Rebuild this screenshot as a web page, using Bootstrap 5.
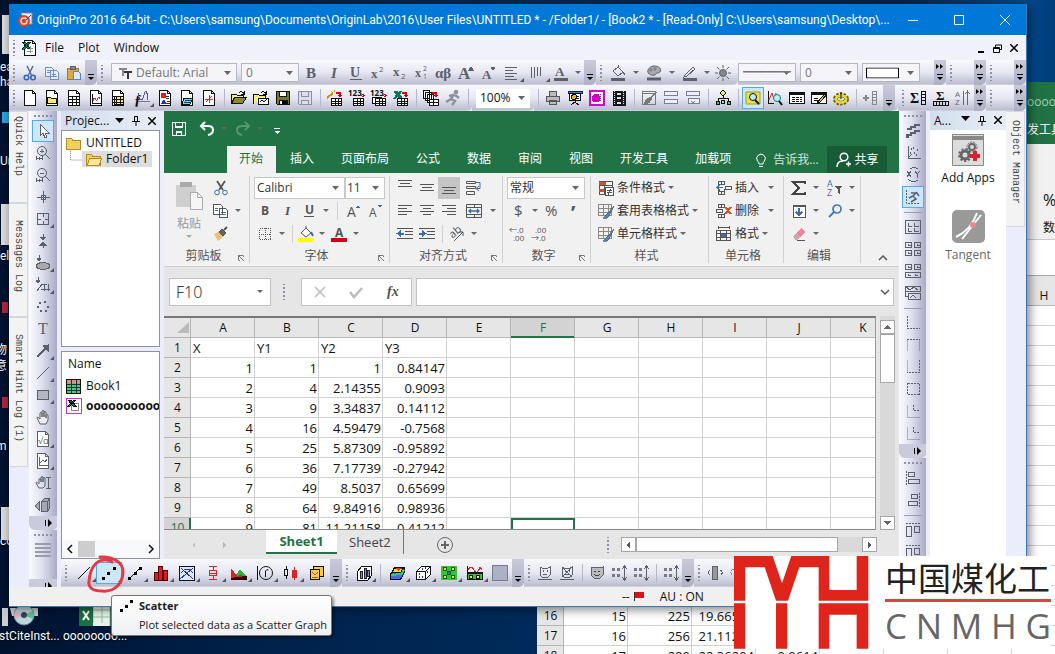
<!DOCTYPE html>
<html lang="zh-CN">
<head>
<meta charset="utf-8">
<meta name="viewport" content="width=device-width, initial-scale=1">
<title>OriginPro 2016 64-bit</title>
<link href="https://cdn.jsdelivr.net/npm/bootstrap@5.3.0/dist/css/bootstrap.min.css" rel="stylesheet">
<style>
:root{--ui:"Open Sans","Noto Sans CJK SC",sans-serif;--green:#217346;--lav:#ebedfc}
html,body{height:100%}
body{font:12px/16px var(--ui);color:#111;overflow:hidden;background:#002149}
button,select,input{font:inherit;color:inherit;border-radius:0}
button{background:none;border:0;padding:0}
.desk{position:relative;height:100vh;overflow:hidden;background:linear-gradient(90deg,#001230 0,#00224b 25%,#002a5a 50%,#00244e 85%,#004a8c 97%,#003c7a)}
.deskitem{position:absolute;color:#fff;white-space:nowrap;text-shadow:0 1px 2px #000;font-family:Roboto,"Noto Sans CJK SC",sans-serif}
.win{position:absolute;display:flex;flex-direction:column;overflow:hidden}
.win aside{flex:none}
.back{left:537px;top:82px;right:0;bottom:0;background:#f1f1f1}
.back>*{flex:none}
.back .edge{padding-left:490px;white-space:nowrap;overflow:hidden}
.back .green{background:var(--green);height:62px;color:#9fd3b5}
.back .rib{height:96px;border-bottom:1px solid #c8c8c8}
.back .fml{height:36px;background:#fff;border-bottom:1px solid #aaa}
.back .cells{width:539px;background:#fff}
.main{left:9px;top:4px;right:28px;bottom:47px;background:var(--lav);border-right:1px solid #3a7ab8;border-bottom:1px solid #3a7ab8;box-shadow:2px 2px 10px #0008}
.titlebar{height:31px;background:#0078d7;color:#fff;flex:none}
.titlebar>span{font-family:Roboto,sans-serif}
.titlebar button{width:46px;height:31px}
.menubar{height:25px;background:#f1f1fc;flex:none}
.menubar .mi{margin-left:14px}
.strip{height:25px;flex:none}
.strip+.strip{height:26px}
.tools{background:linear-gradient(#f8f8fd,#e6e7f2 50%,#bcbed0 96%,#dcdcea);display:flex;align-items:center;height:100%;border-radius:0 0 5px 0}
.tools.vert{flex-direction:column;background:linear-gradient(90deg,#fbfbff,#dfe1f0 45%,#a9abc6)}
.tb{width:22px;height:22px;flex:none;display:flex;align-items:center;justify-content:center;position:relative;color:#111}
.tb svg{display:block;overflow:visible}
.tb.on{background:#cce6fa;box-shadow:inset 0 0 0 1px #5aa9e6}
.tb.corner::after{content:"";position:absolute;right:0;bottom:2px;border:2px solid;border-color:transparent #555 #555 transparent}
.dim .tb,.vert .tb{color:#5c606b}
.sepv{width:8px;height:18px;flex:none;background:linear-gradient(#b5b7c8,#b5b7c8) center/1px 100% no-repeat}
.vert .sepv{width:18px;height:8px;background:linear-gradient(#9a9cb5,#9a9cb5) center/100% 1px no-repeat}
.dropv{width:12px;height:20px;flex:none;display:flex;align-items:center;justify-content:center}
.dropv::before{content:"";border:3px solid transparent;border-top-color:#666;border-bottom:0}
.grip{width:10px;height:16px;flex:none;background:radial-gradient(circle,#8f91a5 1px,transparent 1px) center/4px 4px repeat-y}
.vert .grip{width:18px;height:9px;background:radial-gradient(circle,#8f91a5 1px,transparent 1px) center/4px 4px repeat-x}
.cap{width:12px;height:100%;flex:none;background:linear-gradient(#c9cad9,#aeb0c6);border-radius:0 0 6px 0;color:#000;display:flex;align-items:end;justify-content:center}
.vert .cap{width:100%;height:14px;background:#c9cbdd;align-items:center;justify-content:end;border-radius:0 0 6px 6px}
.pick{appearance:none;border:1px solid #b5b7c4;height:19px;line-height:16px;padding:0 4px;flex:none;margin-right:4px;background:#fff url("data:image/svg+xml,%3Csvg xmlns='http://www.w3.org/2000/svg' viewBox='0 0 7 4'%3E%3Cpath d='M0 0h7L3.500 4z' fill='%23666'/%3E%3C/svg%3E") no-repeat right 5px center/7px 4px}
.dim .pick{color:#777;background-color:#f4f4f9}
.sidetab{writing-mode:vertical-rl;font:10px/18px "Liberation Mono",monospace;color:#444;background:#f3f3f3;border:1px solid #d5d6e4;border-left:0;height:114px;padding-top:16px;width:19px;white-space:nowrap}
.panelhead{height:19px;background:linear-gradient(90deg,#d3dfee,#e7edf6);flex:none;padding:0 4px}
.box{background:#fff;border:1px solid #8e919c;overflow:hidden}
.colname{padding:0 6px 6px}
.xl{background:#e6e6e6;min-width:0;overflow:hidden}
.qat{height:35px;background:var(--green);flex:none}
.qat .tb{color:#fff}
.xtabs{height:27px;background:var(--green);color:#fff;flex:none;white-space:nowrap}
.xtabs a{color:#fff;text-decoration:none;padding:0 13px;line-height:25px;margin-right:1px}
.xtabs a.on{background:#f1f1f1;color:var(--green);padding-left:12px;height:27px}
.ribbon{height:94px;background:#f1f1f1;border-bottom:1px solid #cfcfcf;flex:none;padding-top:3px}
.rg{border-right:1px solid #d0d0d0;height:87px;padding-left:4px;display:flex;flex-direction:column;flex:none;position:relative;color:#333}
.rg>.r{height:23px;display:flex;align-items:center;flex:none}
.rg .tb{color:#555}
.rg .sepv{background:linear-gradient(#d0d0d0,#d0d0d0) center/1px 100% no-repeat}
.rg .tb.on{background:#c5c5c5;box-shadow:none}
.rg footer{margin-top:auto;text-align:center;color:#555;line-height:14px;padding:0 10px 0 0}
.rg .launch::after{content:"";position:absolute;right:5px;bottom:2px;width:6px;height:6px;border:1px solid;border-color:#777 transparent transparent #777;background:linear-gradient(45deg,transparent 45%,#777 45% 60%,transparent 60%)}
.rg .pick{height:22px;border-color:#c8c8c8;margin:0}
.fbar{height:49px;flex:none;padding:0 5px}
.fbar .field{height:28px;background:#fff;border:1px solid #c3c3c3}
.fbar input{border:0;background:transparent;min-width:0;outline:0}
.fbar .tb{color:#555}
.sheet{border-top:2px solid #777;border-right:1px solid #999;border-bottom:1px solid #888;overflow:hidden;background:#fff;min-width:0}
.cells{table-layout:fixed;border-collapse:separate;border-spacing:0;font-size:13px;line-height:18px;color:#111;width:731px}
.cells th,.cells td{height:20px;padding:0 1px 0 2px;border-right:1px solid #d0d0d0;border-bottom:1px solid #d0d0d0;font-weight:400;white-space:nowrap;overflow:hidden;width:64px}
.cells td{text-align:right}
.cells td.tx{text-align:left}
.cells th{background:#e6e6e6;text-align:center;border-color:#b5b5b5;font-size:12px}
.cells th:first-child{width:27px}
.cells th.sel{background:#d3d3d3;color:var(--green);box-shadow:inset 0 -1px var(--green);border-bottom-color:var(--green)}
.cells tbody th.sel{box-shadow:inset -1px 0 var(--green);border-right-color:var(--green)}
.cells td.cur{border:2px solid var(--green)}
.sb{background:#fff;border:1px solid #a6a6a6;flex:none;display:flex;align-items:center;justify-content:center}
.sheettab{height:24px;font-size:13px;color:#444;text-align:left}
.sheettab.on{width:71px;background:#fff;color:var(--green);border-bottom:2px solid var(--green);text-align:center;font-weight:700}
.tip{position:absolute;left:111px;top:595px;width:221px;height:41px;background:linear-gradient(#fff,#eff0f4);border:1px solid #767676;border-radius:3px;box-shadow:2px 2px 3px #0006;color:#222;padding:0 0 0 27px;font-size:11px;line-height:19px;white-space:nowrap}
.ring{position:absolute;left:85px;top:553px}
.brand{position:absolute;left:734px;top:556px;width:317px;height:93px;background:#fff}
.brand h2{font:33px/43px "Noto Sans CJK SC",sans-serif;margin:0;color:#222}
.brand p{font-size:35px;line-height:40px;color:#666;margin:0}
</style>
</head>
<body>
<div class="desk">
  <div class="deskitem" style="left:0;top:59px">ea</div>
  <div class="deskitem" style="left:0;top:74px">ha</div>
  <div class="deskitem" style="left:0;top:153px">Ur</div>
  <div class="deskitem" style="left:0;top:248px">ela</div>
  <div class="deskitem" style="left:-5px;top:342px">物</div>
  <div class="deskitem" style="left:-5px;top:358px">意</div>
  <div class="deskitem" style="left:-4px;top:438px">m</div>
  <div class="deskitem" style="left:0;top:533px">co</div>
  <svg class="deskitem" style="left:0;top:0" width="10" height="540" aria-hidden="true"><path fill="#ddd" d="M2 15h8v39H2zM1 204h9v41H1zM1 507h9v33H1z"/><path fill="#2ba4e0" d="M2 112h8v11H2z"/><path fill="#b3233c" d="M2 302h6v11H2zM2 397h6v11H2z"/></svg>
  <svg class="deskitem" style="left:0;top:600px" width="120" height="26" aria-hidden="true"><path fill="#ccc" d="M2 8h6v24H2zM10 8h28v8H12z"/><circle cx="24" cy="15" r="10" fill="#bcd8dc" stroke="#789"/><path d="M24 15l9-4a10 10 0 010 8z" fill="#5bc0a0"/><path d="M24 15l-9 4a10 10 0 010-8z" fill="#e0b0d0"/><circle cx="24" cy="15" r="3" fill="#345"/><path fill="#e8f3e9" stroke="#8fbf99" d="M84 3h26v28H84zM93 3v20M102 3v20M84 10h26M84 17h26"/><path fill="#1d7044" d="M79 5l14-2v26l-14-2z"/><path stroke="#fff" stroke-width="2" d="M83 11l6 9M89 11l-6 9"/></svg>
  <div class="deskitem" style="left:-1px;top:628px">stCiteInst...</div>
  <div class="deskitem" style="left:63px;top:628px">oooooooo...</div>

  <section class="win back" aria-label="Workbook">
    <div class="green edge"><div class="pt-2 mt-1">ooooo</div><div class="pt-2 mt-1 text-white">发工具</div></div>
    <div class="rib edge"><div class="mt-5 ps-3 fs-6">%</div><div class="mt-2 ps-3 pt-1">数</div></div>
    <div class="fml"></div>
    <table class="cells" id="backcells"></table>
  </section>

  <main class="win main">
    <header class="titlebar d-flex align-items-center">
      <svg class="ms-2 me-1 flex-shrink-0" width="16" height="16" viewBox="0 0 16 16"><path d="M4 1h11v11H8z" fill="#eef" stroke="#889"/><circle cx="7" cy="9" r="6" fill="#d9432f"/><circle cx="7" cy="9" r="3" fill="none" stroke="#ffd9cf" stroke-width="1.500"/><path d="M9 8l5-5" stroke="#444"/></svg>
      <span class="text-nowrap">OriginPro 2016 64-bit - C:\Users\samsung\Documents\OriginLab\2016\User Files\UNTITLED * - /Folder1/ - [Book2 * - [Read-Only] C:\Users\samsung\Desktop\...</span>
      <div class="ms-auto d-flex">
        <button aria-label="Minimize"><svg width="10" height="10" stroke="#fff"><path d="M0 5.500h10"/></svg></button>
        <button aria-label="Maximize"><svg width="10" height="10" stroke="#fff" fill="none"><path d="M.5.5h9v9h-9z"/></svg></button>
        <button aria-label="Close"><svg width="10" height="10" stroke="#fff"><path d="M0 0l10 10M10 0L0 10"/></svg></button>
      </div>
    </header>
    <nav class="menubar d-flex align-items-center">
      <div class="grip"></div><button class="tb" data-i="xldoc" aria-label="Workbook menu"></button>
      <button class="ms-1">File</button><button class="mi">Plot</button><button class="mi">Window</button>
      <div class="ms-auto d-flex gap-2 me-2 align-items-center">
        <button aria-label="Minimize workbook"><svg width="8" height="10" stroke="#000" stroke-width="2"><path d="M1 9h6"/></svg></button>
        <button aria-label="Restore workbook"><svg width="9" height="9" stroke="#000" fill="none"><path d="M2.500 3V1h6v4.500H7M.5 3.500h6v5h-6zM.5 4.500h6"/></svg></button>
        <button aria-label="Close workbook"><svg width="8" height="8" stroke="#000" stroke-width="1.500"><path d="M0 0l8 8M8 0L0 8"/></svg></button>
      </div>
    </nav>

    <div class="strip d-flex dim">
      <div class="tools" data-tools="grip cut copy paste cap"></div>
      <div class="tools flex-shrink-0"><div class="d-flex me-1" data-tools="grip"></div>
        <div class="position-relative"><select class="pick ps-4" style="width:126px" aria-label="Font"><option>Default: Arial</option></select><svg class="position-absolute top-50 start-0 translate-middle-y ms-2" width="13" height="12" viewBox="0 0 13 12" stroke="#333" fill="none" stroke-width="2"><path stroke="#888" d="M0 2h8M4 2v7"/><path d="M5 5h8M9 5v7"/></svg></div>
        <select class="pick me-0" style="width:58px" aria-label="Font size"><option>0</option></select>
        <div class="d-flex align-items-center h-100" data-tools="gap:2 bold italic underline sup sub supsub greek bigA smallA alignl^:25 bars^:26 fontcolor v cap"></div></div>
      <div class="tools flex-grow-1" data-tools="grip bucket:24 v palette:24 v pencil:24 v:10 sun"></div>
      <div class="tools pe-0 flex-shrink-0">
        <select class="pick" style="width:58px" aria-label="Line style"><option>━━━━</option></select>
        <select class="pick" style="width:58px" aria-label="Line width"><option>0</option></select>
        <div class="position-relative me-2"><select class="pick" style="width:58px" aria-label="Border"><option></option></select><svg class="position-absolute top-50 start-0 translate-middle-y ms-1" width="33" height="11"><path d="M.5.5h32v10H.5z" fill="#fff" stroke="#000"/></svg></div>
        <div class="h-100 d-flex" data-tools="gap:2 cap2"></div></div>
      <div class="tools" data-tools="grip gap:18 cap2"></div>
      <div class="tools" data-tools="grip gap:18 cap2"></div>
    </div>
    <div class="strip d-flex">
      <div class="tools" data-tools="grip new newfolder newgrid newgraph newyellow fx^:25 newmatrix newlayout newnote | open opentpl save savegrey | wiz imp imp2 impx | batch run |"></div>
      <div class="tools"><select class="pick ms-1 border-0" style="width:54px" aria-label="Zoom"><option>100%</option></select></div>
      <div class="tools flex-grow-1" data-tools="| print slide magenta film | brush rowsA rowsB | org | look* plotlook tablei tableedit gear | addcol gap:1 cap"></div>
      <div class="tools" data-tools="grip sumcol sum sort cap2"></div>
      <div class="tools" data-tools="grip gap:18 cap2"></div>
    </div>

    <div class="d-flex flex-grow-1" style="min-height:0">
      <aside class="d-flex flex-column" style="width:20px">
        <div class="sidetab pt-1" style="height:92px">Quick Help</div><div class="sidetab">Messages Log</div><div class="sidetab" style="height:150px">Smart Hint Log (1)</div>
      </aside>
      <aside class="d-flex flex-column" style="width:28px">
        <div class="tools vert h-auto" data-tools="grip arrow* zoomin zoomout cross reader^ pts ellipsesel^ regsel^ dots tee arrowup^ line^ rect^ hand formula^ graphobj^ panhand box3 capr"></div>
        <div class="tools vert flex-grow-1" data-tools="grip menu4 gap:18 capr"></div>
      </aside>
      <div class="d-flex flex-column flex-grow-1 ms-1" style="min-width:0;flex-basis:0">
        <div class="d-flex flex-grow-1" style="min-height:0">
          <aside class="d-flex flex-column me-1" style="width:99px">
            <div class="panelhead d-flex align-items-center"><span>Projec...</span><span class="ms-auto d-flex gap-2 align-items-center" data-tools="phead"></span></div>
            <div class="box" style="height:217px"><div class="d-flex align-items-center ps-1 pt-1"><span class="me-1" data-i="folder"></span>UNTITLED</div>
              <div class="d-flex align-items-center ps-2"><svg width="12" height="16" stroke="#888" stroke-dasharray="1 1"><path d="M.5 0v9h12" fill="none"/></svg><span class="px-1 d-flex align-items-center" style="background:#ddd"><span class="me-1" data-i="folderopen"></span>Folder1</span></div></div>
            <div class="box mt-1 flex-grow-1 d-flex flex-column pt-1"><div class="colname">Name</div>
              <div class="d-flex ps-1 pb-1 align-items-center"><span data-i="bookicon"></span><span class="ps-1">Book1</span></div>
              <div class="d-flex ps-1 align-items-center fw-bold text-nowrap"><span data-i="xlbook"></span><span class="ps-1">ooooooooooo</span></div>
              <div class="mt-auto d-flex bg-light align-items-center" style="height:18px"><button aria-label="Scroll left" data-i="chevl"></button><span style="width:17px;height:16px;background:#cdcdcd"></span><button class="ms-auto" aria-label="Scroll right" data-i="chevr"></button></div></div>
          </aside>
          <section class="xl d-flex flex-column flex-grow-1" aria-label="Book2">
            <div class="qat d-flex align-items-center ps-1" data-tools="xsave gap:6 undo v gap:2 redo v:12 xmore"></div>
            <nav class="xtabs d-flex" style="padding-left:63px"><a class="on" href="#">开始</a><a href="#">插入</a><a href="#">页面布局</a><a href="#">公式</a><a href="#">数据</a><a href="#">审阅</a><a href="#">视图</a><a href="#">开发工具</a><a href="#">加载项</a>
              <span class="d-flex align-items-center ms-2"><span data-i="bulb"></span><span class="ms-1" style="color:#d0e5d9">告诉我...</span></span>
              <button class="ms-2 px-2 d-flex align-items-center gap-1" style="background:#185c37"><span data-i="person"></span>共享</button></nav>
            <div class="ribbon d-flex">
              <div class="rg" style="width:86px"><div class="d-flex"><button style="width:42px;color:#999"><span class="d-flex justify-content-center mb-1" data-i="bigpaste"></span>粘贴<span class="dropv w-100" style="height:10px;opacity:.5"></span></button>
                <div><div class="d-flex align-items-center" style="height:23px" data-tools="xcut"></div><div class="d-flex align-items-center" style="height:23px" data-tools="xcopy v"></div><div class="d-flex align-items-center" style="height:23px" data-tools="fmt"></div></div></div><footer class="launch">剪贴板</footer></div>
              <div class="rg" style="width:140px"><div class="r"><select class="pick" style="width:91px;padding:0 2px" aria-label="字体"><option>Calibri</option></select><select class="pick" style="width:40px;padding:0 1px" aria-label="字号"><option>11</option></select></div>
                <div class="r" data-tools="xB xI xU v sep:10 xA1 xA2"></div><div class="r" data-tools="xborder v | xfill:20 v xfont v"></div><footer class="launch">字体</footer></div>
              <div class="rg" style="width:113px"><div class="r" data-tools="at am ab* wrap:28"></div><div class="r" data-tools="al ac ar merge:28 v:10"></div><div class="r" data-tools="ind1 ind2 | orient v"></div><footer class="launch">对齐方式</footer></div>
              <div class="rg" style="width:88px"><div class="r"><select class="pick" style="width:78px;padding:0 2px" aria-label="数字格式"><option>常规</option></select></div>
                <div class="r" data-tools="dollar v pct comma"></div><div class="r" data-tools="dec1 dec2"></div><footer class="launch">数字</footer></div>
              <div class="rg" style="width:118px"><button class="r" data-tools="cond t:条件格式 v"></button><button class="r" data-tools="tfmt t:套用表格格式 v"></button><button class="r" data-tools="tfmt t:单元格样式 v"></button><footer>样式</footer></div>
              <div class="rg" style="width:75px"><button class="r" data-tools="cins t:插入 gap:6 v"></button><button class="r" data-tools="cdel t:删除 gap:6 v"></button><button class="r" data-tools="cfmt t:格式 v"></button><footer>单元格</footer></div>
              <div class="rg" style="width:77px"><div class="r" data-tools="sigma v gap:2 az v"></div><div class="r" data-tools="filldown v gap:2 find v"></div><div class="r" data-tools="eraser v"></div><footer>编辑</footer></div>
              <button class="ms-auto align-self-end me-2" data-i="chevu" aria-label="折叠功能区"></button>
            </div>
            <div class="fbar d-flex align-items-center">
              <div class="field d-flex align-items-center px-1" style="width:102px"><input class="flex-grow-1 fs-6 fw-light" style="width:60px" value="F10" aria-label="名称框"><span class="dropv"></span></div>
              <span class="grip mx-2"></span><div class="field ms-1 d-flex align-items-center justify-content-around" style="width:111px" data-tools="no yes fxs"></div>
              <div class="field flex-grow-1 ms-1 d-flex align-items-center"><input class="flex-grow-1" aria-label="编辑栏"><span data-i="chevd"></span></div>
            </div>
            <div class="d-flex flex-grow-1" style="min-height:0">
              <div class="sheet flex-grow-1" style="flex-basis:0"><table class="cells" id="frontcells"></table></div>
              <div class="d-flex flex-column flex-shrink-0 ms-1 me-1" style="width:15px;background:#d9d9d9"><button class="sb mt-1" style="height:14px" data-i="triu" aria-label="向上"></button><div class="sb" style="height:49px"></div><button class="sb mt-auto" style="height:14px" data-i="trid" aria-label="向下"></button></div>
            </div>
            <div class="d-flex align-items-center flex-shrink-0" style="height:29px;padding-right:22px">
              <div class="d-flex" style="width:102px;padding-left:25px"><span data-i="tril"></span><span class="ms-2 ps-1" data-i="trir"></span></div>
              <button class="sheettab on align-self-start">Sheet1</button>
              <button class="sheettab align-self-start px-2 ms-1 border-end border-secondary" style="width:63px">Sheet2</button>
              <button data-i="plus" style="margin-left:33px" aria-label="新工作表"></button>
              <span class="grip ms-auto me-2"></span><button class="sb" style="width:15px;height:15px" data-i="tril2" aria-label="向左"></button><div class="d-flex" style="width:226px;background:#d9d9d9"><div class="sb" style="width:202px;height:15px"></div></div><button class="sb" style="width:15px;height:15px" data-i="trir2" aria-label="向右"></button>
            </div>
          </section>
        </div>
        <div class="d-flex" style="height:28px;flex:none">
          <div class="tools" data-tools="grip line^:25 scatter^*:26 linesym^:26 column^:26 xbox^:26 boxp^:26 area^:26 polar^:26 candle^:26 tmpl:26 cap"></div>
          <div class="tools" data-tools="grip bar3^:24 | surf^:26 dice^:26 contour^:26 heat^:26 greybox:24 cap"></div>
          <div class="tools dim" data-tools="grip mask unmask | mask2 dot1 dot1 | dot1 cap"></div>
          <div class="tools dim flex-grow-1" data-tools="grip rot1 rot2"></div>
        </div>
      </div>
      <aside class="d-flex flex-column" style="width:27px">
        <div class="tools vert h-auto flex-shrink-0" data-tools="grip stairs scat3 xy runplot* | lay1 lay2 lay3 lay4 | ax1 ax2 ax3 ax4 ax5 ax5 capr"></div>
        <div class="tools vert flex-grow-1 overflow-hidden" data-tools="grip alg1 alg2 | alg3 alg3"></div>
      </aside>
      <aside class="bg-white ms-1" style="width:76px"><div class="panelhead d-flex align-items-center"><span>A...</span><span class="ms-auto d-flex gap-2" data-tools="phead"></span></div>
        <button class="d-block w-100 text-nowrap"><span class="d-flex justify-content-center mb-1 mt-1" data-i="addapps"></span>Add Apps</button>
        <button class="d-block w-100 mt-4" style="color:#666"><span class="d-flex justify-content-center mb-1" data-i="tangent"></span>Tangent</button></aside>
      <aside style="width:20px"><div class="sidetab pt-2" style="height:116px">Object Manager</div></aside>
    </div>
    <footer class="d-flex align-items-center flex-shrink-0" style="height:19px;background:#f0f0f0;padding-left:613px"><span>--</span><svg class="ms-1 me-3" width="10" height="9"><path d="M.5 0v9" stroke="#333"/><path d="M1 0h9v6H1z" fill="#e01020"/></svg><span>AU : ON</span></footer>
  </main>

  <div class="tip" role="tooltip"><svg class="position-absolute start-0 top-0 ms-2 mt-1" width="16" height="14"><path d="M0 9h3v3H0zM5 5h3v3H5zM10 0h3v3h-3z"/></svg><b>Scatter</b><div>Plot selected data as a Scatter Graph</div></div>
  <svg class="ring" width="44" height="44" viewBox="0 0 44 44" fill="none" stroke="#e43a45" stroke-width="3" stroke-linecap="round"><path d="M15 4C27 3 39 9 38 20C37 34 26 39 17 38C8 38 3 35 4 28C5 17 10 6 21 7C24 7 26 8 27 9"/></svg>
  <div class="brand d-flex"><svg class="flex-shrink-0" width="135" height="93" viewBox="102 198 405 279" fill="#df241c" role="img" aria-label="MH"><path d="M102 198H218L246 280 274 198H388V300H470V198H505V332H356V232H298L264 332H228L194 232H136V332H102zM102 340H136V476H102zM228 340H262V476H228zM356 340H505V476H470V374H388V476H356z"/></svg>
    <div class="ps-3 flex-grow-1"><h2 class="text-nowrap">中国煤化工</h2><div style="height:3px;background:#d9443f"></div><p class="d-flex justify-content-between mt-1"><span>C</span><span>N</span><span>M</span><span>H</span><span>G</span></p></div></div>
</div>
<script src="https://cdn.jsdelivr.net/npm/bootstrap@5.3.0/dist/js/bootstrap.bundle.min.js"></script>
<script>
const page='<path d="M2.500.5h8l3 3v12h-11z" fill="#fff"/><path d="M10.500.5v3h3"/>';
const miniGrid='<path d="M4.500 8.500h10v7h-10zM4.500 11h10M4.500 13h10M8 8.500v7M11 8.500v7" fill="#fff"/>';
const T=(s,x,y,z,o='')=>`<text x="${x}" y="${y}" font-size="${z}" fill="currentColor" stroke="none" ${o}>${s}</text>`;
const serif='font-family="Liberation Serif" font-weight="bold"';
const redArrow='<path d="M9 3h4v4M11 5l2 2 2-2" stroke="#d00" stroke-width="1.300"/>';
const xmark='<path d="M1 1h3l5 7H6zM7 1h2L3 8H1z" fill="#0a7a6a" stroke="#075"/>';
const fold='<path d="M.5 3.500h5l1 1.500h8v9.500H.5z" fill="#f2cf63" stroke="#b98a1e"/>';
const lines=(a)=>`<path d="${a.map(([x,y,w])=>`M${x} ${y}.5h${w}`).join('')}"/>`;
const smallDots='<path d="M1 3h3v3H1zM6 3h3v3H6zM1 9h3v3H1zM6 9h3v3H6z" fill="currentColor" stroke="none" opacity=".8"/><path d="M13.500 1v14M11 4l2.500-3L16 4M11 12l2.500 3 2.500-3"/>';
const mk='<path d="M3 2l2 1h6l2-1v8l-2 2H5l-2-2z"/><path d="M6 5v1.500M10 5v1.500M6 9q2 2 4 0M1 14.500h14"/>';
const I={
xldoc:page+'<path d="M5 8h6M5 11h6M8 6v7" stroke="#999"/><path d="M0 2h3l5 6H5zM6 2h3L3 9H0z" fill="#086" stroke="#000" stroke-width=".7"/>',
cut:'<path d="M5 1l4.500 9M11 1L6.500 10" stroke="#5a6a94" stroke-width="1.500"/><circle cx="4.500" cy="12.500" r="2.300" stroke="#2f62c0" stroke-width="1.500"/><circle cx="11" cy="12.500" r="2.300" stroke="#2f62c0" stroke-width="1.500"/>',
copy:'<path d="M1.500 2.500h6l2 2v7h-8zM6.500 5.500h6l2 2v7h-8z" fill="#e8f0ff" stroke="#6f8fc8"/><path d="M3 5.500h3M3 7.500h3M8 9.500h4M8 11.500h5" stroke="#6f8fc8"/>',
paste:'<path d="M1 3h11v11H1z" fill="#dba94a" stroke="#a87620"/><path d="M4 1h5v3H4z" fill="#888"/><path d="M7.500 6.500h5l2 2v6h-7z" fill="#dce9ff" stroke="#5f83bf"/>',
bold:T('B',2,13,15,serif),italic:T('I',5,13,15,serif+' font-style="italic"'),underline:T('U',2,12,14,serif)+'<path d="M2 14.500h12"/>',
sup:T('x',1,13,13,serif)+T('2',9,7,8),sub:T('x',1,11,13,serif)+T('2',9,14,8),supsub:T('x',1,12,12,serif)+T('2',9,6,7)+T('1',9,14,7),
greek:T('αβ',-1,13,15,serif),bigA:T('A',0,14,17,serif)+'<path d="M11 5l2-3 2 3z" fill="currentColor"/>',smallA:T('A',2,14,13,serif)+'<path d="M11 2h4l-2 3z" fill="currentColor"/>',
alignl:lines([[1,2,12],[1,5,8],[1,8,12],[1,11,9],[1,14,12]]),bars:'<path d="M2.500 2v11M5.500 2v11M8.500 2v9M11.500 2v9"/>',
fontcolor:T('A',2,11,13,serif)+'<path d="M1 12.500h14v3H1z" fill="currentColor" stroke="none"/>',
bucket:'<path d="M3 6l5-4 5 5-5 4zM8 2V0M13 7l2 3"/><path d="M1 12.500h14v3H1z" fill="currentColor" stroke="none"/>',
palette:'<path d="M8 1c5 0 8 3 6 6-2 2-4 0-5 3-5 1-8-2-7-5 1-2 3-4 6-4z" fill="#aaa"/><circle cx="5" cy="5" r="1" fill="#fff"/><circle cx="9" cy="4" r="1" fill="#fff"/><path d="M1 12.500h14v3H1z" fill="currentColor" stroke="none"/>',
pencil:'<path d="M3 10l8-8 2 2-8 7-3 1z"/><path d="M1 13h14v2.500H1z" fill="currentColor" stroke="none"/>',
sun:'<circle cx="8" cy="8" r="3.500" fill="#888"/><path d="M8 0v3M8 13v3M0 8h3M13 8h3M2 2l2.500 2.500M11.500 11.500L14 14M14 2l-2.500 2.500M4.500 11.500L2 14"/>',
new:page,newfolder:page+'<path d="M3.500 7.500h3l1 1h5v5h-9z" fill="#f9ee60"/>',newgrid:page+'<path d="M2.500 6.500h11M2.500 9.500h11M2.500 12.500h11M6.500 6v9M10.500 6v9"/>',
newgraph:page+'<path d="M4.500 4v9h8"/><path d="M5 11c2-7 3 2 4-1s2-3 3-1" stroke="#d22"/>',newyellow:page+'<path d="M4 6.500h9v8H4z" fill="#f9f25c"/><path d="M3 6.500h10M3 9.500h10M3 12.500h10M6.500 6v9M10.500 6v9"/>',
fx:T('ƒ',0,15,15,serif)+'<path d="M4 3c2 9 4 9 6 2s3-4 4 5" stroke="#5a52cc"/><path d="M4 11.500h12" stroke="#777"/>',
newmatrix:page+'<path d="M4.500 3.500h4v4h-4z" fill="#e02020" stroke="#e02020"/><path d="M4 14l3-5 3 5z" fill="#2030d0" stroke="none"/><path d="M9 6.500h3M9 8.500h3M10 11.500h3M10 13.500h3" stroke="#333"/>',
newlayout:page+'<path d="M5 8h9l-3 6H3z" fill="#76d3df"/><path d="M6 10.500h6M5 12.500h6" stroke="#146"/>',newnote:page+'<path d="M5 12l6-6M4 9.500h8M8.500 5v8" stroke="#d22"/>',
open:'<path d="M.5 13.500v-9h5l1 1h6v2" fill="#f5ee7c"/><path d="M.5 13.500l3-6h12l-4 6z" fill="#8d8a28"/><path d="M8 3q3-3 5 1M13 1v3h-3"/>',
opentpl:'<path d="M.5 13.500v-9h5l1 1h6v2" fill="#f5ee7c"/><path d="M5.500 8.500h10v6h-10zM7 12l2-2 2 2 3-3" fill="#fff"/><path d="M8 3q3-3 5 1M13 1v3h-3"/>',
save:'<path d="M1.500 1.500h13v13h-12l-1-1z" fill="#77772a"/><path d="M4.500 1.500h7v5h-7z" fill="#fff"/><path d="M4 10h8v4H4z" fill="#000"/><path d="M5 11h2v3H5z" fill="#eee" stroke="none"/>',
savegrey:'<path d="M1.500 1.500h13v13h-12l-1-1zM4.500 1.500h7v5h-7zM4.500 10.500h7v4h-7z" stroke="#8a8fa6" fill="#dde"/>',
wiz:'<path d="M0 8l6-5" stroke="#c90" stroke-width="2"/><path d="M4 1l1 1M7 0v2M9 3h1" stroke="#c90"/>'+miniGrid+redArrow,
imp:T('123',-1,6,8,'font-weight="bold"')+miniGrid+'<path d="M13 4h1.500v3M12 5l2 2 2-2" stroke="#d00"/>',imp2:T('123',-1,6,8,'font-weight="bold"')+'<path d="M1.500 7.500h9v6h-9z" fill="#fff"/>'+miniGrid+'<path d="M13 4h1.500v3M12 5l2 2 2-2" stroke="#d00"/>',impx:xmark+miniGrid+redArrow,
batch:'<path d="M.5.5h6v8h-6zM2.500 2.500h6v8h-6zM4.500 4.500h6v8h-6z" fill="#fff"/><path d="M6.500 9.500h9v6h-9zM6.500 12.500h9M10.500 9.500v6" fill="#fff"/>'+redArrow,
run:'<g stroke="#8a8f9c" stroke-width="2.500"><path d="M9 4L6 9l4 2-3 4M6 9l-5 3M9 5l-5 1M10 5l4 3"/><circle cx="11" cy="2" r="1"/></g>',
print:'<path d="M4.500 6V1.500h7V6M1.500 6.500h13v5h-13zM4.500 10.500h7v4h-7z" fill="#bbb" stroke="#555"/>',slide:'<path d="M1 1.500h14v2H1z" fill="#4a7bd8" stroke="#124"/><path d="M2.500 3.500h11v7h-11z" fill="#fff"/><circle cx="7" cy="7" r="2.500" fill="#e8b020"/><path d="M8 11v2M4 15l4-3 4 3M10 6.500h2M10 8.500h2"/>',
magenta:'<path d="M1 1h14v14H1z" fill="#fff" stroke="#d0c" stroke-width="2"/><circle cx="7" cy="8.500" r="3.500" fill="#c0b" stroke="#c0b"/><path d="M11.500 4v8" stroke="#c0b" stroke-dasharray="1 1"/><path d="M5 4.500h5" stroke="#c0b"/>',
film:'<path d="M2 1h12v14H2z" fill="#222"/><path d="M5.500 2h5v3h-5zM5.500 6.500h5v3h-5zM5.500 11h5v3h-5z" fill="#ddd"/><path d="M3.500 1v14M12.500 1v14" stroke="#ddd" stroke-dasharray="1 1"/>',
brush:'<path d="M1.500 1.500h13v13h-13zM2 3.500h12" stroke="#777"/><path d="M15 2L9 9M9 8q-4 1-5 5 4 1 6-4z" stroke="#777" fill="#777" stroke-width="1.500"/>',rowsA:'<path d="M1.500 1.500h13v4h-13zM1.500 9.500h13v4h-13z" fill="#eef" stroke="#7a7f90"/>',rowsB:'<path d="M1.500 1.500h13v4h-13zM3.500 8.500h11v5h-11zM6 11l2 2 2-2" fill="#eef" stroke="#7a7f90"/>',
org:'<path d="M8.500 4v4M3 12V8.500h10V12"/><circle cx="8" cy="3" r="2.300" fill="#ee6"/><circle cx="8" cy="12" r="2" fill="#7dd"/><path d="M1.500 11.500h3v3h-3zM12.500 11.500h3v3h-3z" fill="#5b5"/>',
look:'<path d="M1 2h14v12H1z" fill="#e9df4d" stroke="#a89c20"/><circle cx="8" cy="7" r="3.500" fill="#bdf0f5"/><path d="M10 10l4 4" stroke-width="2"/>',plotlook:'<path d="M1.500 1v12M1 13.500h6"/><path d="M2 10l3-7 2 6 2-6" stroke="#d22"/><circle cx="10" cy="8" r="3.500" fill="#bdf0f5" stroke="#178"/><path d="M12 11l3 4" stroke-width="2"/>',
tablei:'<path d="M.5 2.500h15v11H.5z" fill="#fff"/><path d="M1 3.500h14" stroke-width="3"/><path d="M3 7.500h10M3 9.500h10M3 11.500h10" stroke-dasharray="3 1"/>',tableedit:'<path d="M.5 2.500h15v11H.5z" fill="#fff"/><path d="M1 3.500h14" stroke-width="3"/><path d="M3 8.500h4M3 10.500h4"/><path d="M7 13l8-9" stroke-width="3"/><path d="M8 12l6-7" stroke="#dc3"/>',
gear:'<ellipse cx="8" cy="9" rx="5.500" ry="4" stroke="#6b6000" stroke-width="5" stroke-dasharray="2 1"/><ellipse cx="8" cy="9" rx="5" ry="3.500" stroke="#eadb25" stroke-width="2.500"/><path d="M8 2v7"/>',
addcol:'<path d="M0 8h6M3 5v6" stroke="#888" stroke-width="2"/><path d="M9.500 1.500h4v13h-4zM9 4.500h5M9 7.500h5M9 10.500h5" stroke="#888"/>',sumcol:T('Σ',-1,13,14,serif)+'<path d="M10.500 1.500h4v13h-4zM10 4.500h5M10 7.500h5M10 10.500h5"/>',sum:T('Σ',3,10,13,serif)+'<path d="M.5 11.500h15v4H.5zM3.500 11v4M6.500 11v4M9.500 11v4M12.500 11v4"/>',sort:'<g color="#666">'+T('A',0,7,8)+T('Z',0,15,8)+'<path d="M8.500 1v14M12.500 15V1l-2 3M12.500 1l2 3" stroke="#666"/></g>',
arrow:'<path d="M5 1v12l3-3 2 5 2-1-2-4h4z" fill="#fff"/>',zoomin:'<circle cx="7" cy="6" r="4.500"/><path d="M5 6.500h4M7 4v4M10 9l5 5M1 13.500h7M1.500 11v4M4.500 12v3M7.500 11v4"/>',zoomout:'<circle cx="7" cy="6" r="4.500"/><path d="M5 6.500h4M10 9l5 5M1 13.500h7M1.500 11v4M4.500 12v3M7.500 11v4"/>',
cross:'<path d="M8.500 2v12M2 8.500h13M6.500 6.500h4v4h-4z"/>',reader:'<path d="M2.500 2.500h11v11h-11zM8.500 2v4M8.500 10v4M2 8.500h4M10 8.500h4"/>',pts:'<path d="M8 1v4M5 4l3 3 3-3zM8 15v-4M5 12l3-3 3 3z" fill="currentColor"/>',ellipsesel:'<ellipse cx="8" cy="11" rx="7" ry="3.500" fill="#aaa"/><path d="M4 0v5M2 3l2 3 2-3z" fill="currentColor"/>',regsel:'<path d="M3 0v5M1 3l2 3 2-3z" fill="currentColor"/><path d="M2 14L7 7h5M6 12.500h9M9.500 7v7M13.500 7v7"/>',
dots:'<path d="M4 4h2M9 3h2M2 8h2M12 8h2M5 12h2M10 12h2" stroke-width="2"/>',tee:T('T',3,13,16,'font-family="Liberation Serif"'),arrowup:'<path d="M2 14L12 4" stroke-width="1.500"/><path d="M13 2v6L8 3z" fill="currentColor"/>',line:'<path d="M2 14L14 2" stroke-width="1.300"/>',rect:'<path d="M2.500 3.500h11v9h-11z" fill="#b4b6c2"/>',
hand:'<path d="M5 15L2 9q0-2 3 1V4q1-1 2 0v4-6q1-1 2 0v6-5q1-1 2 0v6-3q1-1 2 0v5l-2 4z" fill="#eee"/>',formula:page+T('√α',3,13,9),graphobj:page+'<path d="M4.500 4v8.500h8M5 10l3-3 2 2 2-3"/>',panhand:'<path d="M4 13L1 8q0-2 3 1V4q1-1 2 0v3-5q1-1 2 0v5-4q1-1 2 0v8l-2 2zM13.500 2v12M11 2.500h5M11 13.500h5" fill="none"/>',box3:'<path d="M6.500 4.500h6v10h-6zM6.500 4.500l3-3h5v10l-2 3M12.500 4.500l2-3M0 9l4-4v8z" fill="#a5a7b5"/>',menu4:'<path d="M0 2h16M0 6h16M0 10h16M0 14h16" stroke="#9a9cae" stroke-width="2"/>',
scatter:'<path d="M1 12h3v3H1zM6 7h3v3H6zM12 2h3v3h-3z" fill="#000" stroke="none"/>',linesym:'<path d="M2 14L14 2"/><path d="M1 12h3v3H1zM7 7h3v3H7zM12 2h3v3h-3z" fill="#000" stroke="none"/>',column:'<path d="M1.500 7.500h4v8h-4zM5.500 1.500h4v14h-4zM10.500 5.500h4v10h-4z" fill="#d81e20" stroke="#500"/>',xbox:'<path d="M.5 1.500h15v14H.5z" fill="#dfe6ff"/><path d="M1 14L14 3M2 3l12 11M2 8q6-8 12 0" stroke="#223a9a"/>',boxp:'<path d="M4 1.500h8M8.500 1v4M4.500 5.500h7v5h-7zM4 8.500h8M8.500 11v4M4 14.500h8" stroke="#d22"/>',
area:'<path d="M0 15V5l5 5 4-6 7 8v3z" fill="#28b040" stroke="none"/><path d="M0 15V3l6 8 4-1 6 3v2z" fill="#d22" stroke="none"/><path d="M0 15v-2l6-1 10-1v4z" fill="#300" stroke="none"/>',polar:'<circle cx="9" cy="8" r="6.500"/><path d="M.5 1v14M8.500 12V6q1-2 3-1"/>',candle:'<path d="M3 1v3M3 11v3M1.500 4.500h3v6h-3z"/><path d="M11.500 2v13M9.500 5.500h4v7h-4z" fill="#d22" stroke="#d22"/>',tmpl:'<path d="M1.500 4.500h9v10h-9zM4.500 1.500h10v10h-4V4.500h-6z" fill="#f6c94a"/><path d="M3 7l3 3 3-3M3 12h6" stroke="#963"/>',
bar3:'<path d="M1.500 6.500l4-5h10v9l-4 5h-10z" fill="#fff"/><path d="M4.500 6.500h2v7h-2zM8.500 3.500h2v10h-2zM11.500 5.500h2v6h-2z" fill="#88a" stroke="#223"/>',surf:'<path d="M1.500 9.500l4-7h10v5l-4 7h-10z" fill="#4868f0"/><path d="M2 8l4-5h9l-3 4z" fill="#e8e030"/><path d="M6 3h6l-2 3z" fill="#e33" stroke="none"/><path d="M2 10l10-1 3-4" stroke="#3c6" stroke-width="2"/>',dice:'<path d="M1.500 6.500l5-5h9v8l-5 5h-9zM1.500 6.500h9v8M10.500 6.500l5-5" fill="#fff"/><path d="M4 9h1M7 12h1M7 4h1M12 7h1M4 12h1M10 3h1" stroke="#22c" stroke-width="1.500"/>',
contour:'<path d="M0 1h16v14H0z" fill="#35c435" stroke="none"/><g fill="#f3dd33" stroke="#14601c"><circle cx="4" cy="4" r="2"/><circle cx="12" cy="4" r="2"/><circle cx="4" cy="12" r="2"/><circle cx="12" cy="12" r="2"/><circle cx="8" cy="8" r="2" fill="#46c"/></g>',heat:'<path d="M1 5q3-6 6 0t6-3l2 3" stroke="#d22"/><path d="M.5 1v14M0 7.500h16"/><path d="M.5 8.500h15v6H.5z" fill="#35c435"/><circle cx="4" cy="12" r="2" fill="#fe3"/><circle cx="11" cy="12" r="2" fill="#fe3"/>',greybox:'<path d="M.5.5h15v15H.5z" fill="#aeb0c4" stroke="#777b93"/>',
mask:mk,unmask:mk+'<path d="M3 2l10 10M13 2L3 12"/>',mask2:'<path d="M2 2q6 2 12 0v8q-6 8-12 0z" fill="#bbb"/><path d="M5 6.500h2M9 6.500h2M5 9q3 4 6 0" stroke="#444"/>',dot1:smallDots,rot1:'<path d="M5.500 1.500h5v13h-5z" fill="#999"/><path d="M3 10q-3-3 0-5M13 5q4 2 1 5"/>',rot2:'<path d="M3 10q-3-5 2-6l8 2" stroke="#888"/>',
stairs:'<path d="M9 2h6M5 4h6M2 6h5M9 8h6M5 10h6M1 12h6M1 14h3" stroke-width="2"/>',scat3:'<path d="M3.500 1v12.500h12M3 13l4-4"/><path d="M6 4h1M9 8h1M12 5h1M11 10h1M5 8h1M8 3h1" stroke-width="2"/>',xy:'<path d="M2 4l4 6M6 4l-4 6M10 4l2 3 3-3M12 7v4M5 2q4-3 8 0M3 12q5 5 10 1"/>',runplot:'<path d="M1.500 1v13.500H15" stroke-dasharray="2 1"/><path d="M12 3L8 7l3 3-5 3M8 7L4 9M6 4h6l2 3" stroke-width="1.500"/>',
lay1:'<path d="M.5 1.500h15v13H.5zM3.500 4v3.500h3M9.500 4v3.500h4M3.500 9v3.500h3M9.500 9v3.500h4"/>',lay2:'<path d="M.5 1.500h6v5h-6zM9.500 1.500h6v5h-6zM.5 9.500h6v5h-6zM9.500 9.500h6v5h-6zM3.500 3v1.500h2M12.500 3v1.500h2M3.500 11v1.500h2M12.500 11v1.500h2"/>',lay3:'<path d="M.5 1.500h6v5h-6zM9.500 1.500h6v5h-6zM.5 9.500h15v5H.5zM3.500 3v1.500h2M12.500 3v1.500h2M3.500 11v1.500h2M10.500 11v1.500h2"/>',lay4:'<path d="M.5 1.500h15v5H.5zM1 2l4 3 4-3 4 3M3.500 8.500h12v6h-12zM.5 7v4.500h3M5 13l3-3 3 3"/>',
ax1:'<path d="M2.500 1v12.500H15" stroke-dasharray="2 1"/>',ax2:'<path d="M2 2.500h13" stroke-dasharray="2 1"/><path d="M2.500 3v11M14.500 3v11" opacity=".4"/>',ax3:'<path d="M14.500 1v12.500H2" stroke-dasharray="2 1"/><path d="M2.500 1v12" opacity=".4"/>',ax4:'<path d="M2.500 2.500h12v11h-12z" stroke-dasharray="2 1"/>',ax5:'<path d="M2.500 2v12H15" opacity=".4"/><path d="M8.500 2v5.500H14" stroke-dasharray="2 1"/>',
alg1:'<path d="M1.500 1v14" stroke-dasharray="2 1"/><path d="M3.500 2.500h6v4h-6zM3.500 9.500h11v4h-11z"/>',alg2:'<path d="M14.500 1v14" stroke-dasharray="2 1"/><path d="M6.500 2.500h6v4h-6zM3.500 9.500h9v4h-9z"/>',alg3:'<path d="M1 1.500h14" stroke-dasharray="2 1"/><path d="M1.500 4.500h5v10h-5zM9.500 4.500h5v6h-5z"/>',
folder:fold,folderopen:fold+'<path d="M1 14l3-7h12l-3 7z" fill="#ffe69a" stroke="#b98a1e"/>',bookicon:'<path d="M.5 1.500h14v14H.5z" fill="#58c878" stroke="#111"/><path d="M1 3h13" stroke="#e88" stroke-width="3"/><path d="M1 6.500h13M1 9.500h13M1 12.500h13M5.500 2v13M10.500 2v13" stroke="#134"/>',xlbook:'<path d="M.5.5h15v15H.5z" fill="#fff" stroke="#d030d0"/><path d="M5.500 5.500h7v7h-7z" stroke="#888"/><path d="M2 2h3l5 6H7zM8 2h2L4 8H2z" fill="#086" stroke="#000"/>',
chevl:'<path d="M10 4L6 8l4 4" stroke-width="1.500"/>',chevr:'<path d="M6 4l4 4-4 4" stroke-width="1.500"/>',chevu:'<path d="M4 10l4-4 4 4" stroke="#555" stroke-width="1.500"/>',chevd:'<path d="M4 6l4 4 4-4" stroke="#555" stroke-width="1.500"/>',
xsave:'<path d="M1.500 1.500h13v13h-13zM4.500 1v5h7V1M5.500 15v-4h5v4" stroke-width="1.600"/>',undo:'<path d="M6 1L2 5l4 4M2 5h7q5 0 5 4t-5 5" stroke-width="2"/>',redo:'<path d="M10 1l4 4-4 4M14 5H7Q2 5 2 9t5 5" stroke-width="2" opacity=".25"/>',xmore:'<path d="M5 7.500h6"/><path d="M5 10h6l-3 3z" fill="#fff" stroke="none"/>',
bulb:'<path d="M6 12q0-2-1.500-3a4.300 4.300 0 117 0Q10 10 10 12zM6 14.500h4" stroke="#fff"/>',person:'<circle cx="9" cy="5" r="3.800" stroke="#fff" stroke-width="1.500"/><path d="M2 15q0-6 6-6M11 12h5M13.500 9.500v5" stroke="#fff" stroke-width="1.500"/>',
xcut:'<path d="M4 1l6 9M12 1L6 10" stroke="#555" stroke-width="1.800"/><circle cx="4" cy="12.500" r="2.300" stroke="#3c6ea5"/><circle cx="12" cy="12.500" r="2.300" stroke="#3c6ea5"/>',xcopy:'<path d="M.5 1.500h7l2 2v8h-9zM6.500 5.500h6l2 2v7h-8z" fill="#fff"/><path d="M2 5.500h3M2 7.500h3M8 9.500h5M8 11.500h5" stroke="#3c6ea5"/>',fmt:'<path d="M1 8l6-3 4 5-6 5z" fill="#edbf7c" stroke="none"/><path d="M6 6l3-3 4 4-3 3z" fill="#666"/><path d="M11 4l3-3" stroke-width="2"/>',
xB:T('B',4,12,12,'font-weight="bold"'),xI:T('I',6,12,13,'font-style="italic" font-family="Liberation Serif" font-weight="bold"'),xU:T('U',4,11,12,'font-weight="bold"')+'<path d="M3 13.500h10"/>',xA1:T('A',2,14,14)+'<path d="M11 5l2-3 2 3z" fill="#3c6ea5" stroke="none"/>',xA2:T('A',2,14,12)+'<path d="M11 2h4l-2 3z" fill="#3c6ea5" stroke="none"/>',
xborder:'<path d="M2.500 2.500h11v11h-11zM8.500 2v12M2 8.500h12" stroke-dasharray="1 1"/>',xfill:'<path d="M3 7l5-5 5 5-5 4zM8 2V0" fill="#fff"/><path d="M13 6l2 4" stroke="#3c6ea5" stroke-width="2"/><path d="M0 12h16v4H0z" fill="#ff0" stroke="none"/>',xfont:T('A',4,11,12,'font-weight="bold"')+'<path d="M0 12h16v4H0z" fill="#d0021b" stroke="none"/>',
at:lines([[1,0,14],[3,3,10],[1,6,14]]),am:lines([[1,4,14],[3,7,10],[1,10,14]]),ab:lines([[1,7,14],[3,10,10],[1,13,14]]),al:lines([[1,2,14],[1,5,9],[1,8,14],[1,11,9]]),ac:lines([[1,2,14],[4,5,8],[1,8,14],[4,11,8]]),ar:lines([[1,2,14],[6,5,9],[1,8,14],[6,11,9]]),
wrap:'<path d="M.5 1.500h9v2h-9zM.5 6.500h9v2h-9zM.5 11.500h8v3h-8z"/><path d="M10 2.500h4v6h-3M13 6l-3 2.500 3 2.500" stroke="#3c6ea5"/>',merge:'<path d="M.5 1.500h15v13H.5zM1 4.500h14M1 11.500h14M8.500 1v3M8.500 12v3"/><path d="M3 8h10M5 6L3 8l2 2M11 6l2 2-2 2" stroke="#3c6ea5" stroke-width="1.300"/>',
ind1:lines([[0,2,16],[8,5,8],[8,8,8],[0,12,16]])+'<path d="M7 7.500H1M4 5L1 7.500 4 10" stroke="#3c6ea5" stroke-width="2"/>',ind2:lines([[0,2,16],[8,5,8],[8,8,8],[0,12,16]])+'<path d="M0 7.500h6M3 5l3 2.500L3 10" stroke="#3c6ea5" stroke-width="2"/>',orient:T('ab',1,10,11,'transform="rotate(-40 6 8)"')+'<path d="M5 15l9-9M10 6h4v4"/>',
dollar:T('$',4,13,15),pct:T('%',1,13,15),comma:T('’',5,17,20,'font-weight="bold"'),dec1:T('←.0',-1,7,8)+T('.00',3,15,8),dec2:T('.00',3,7,8)+T('→.0',-1,15,8),
cond:'<path d="M1.500 1.500h13v13h-13zM1 5.500h13M1 9.500h13M6.500 1v13"/><path d="M1 2h7v3H1zM1 9h5v3H1z" fill="#d05030" stroke="none"/><path d="M7.500 7.500h8v8h-8zM9 10.500h5M9 12.500h5M13 9l-3 6" fill="#fff"/>',tfmt:'<path d="M.5 1.500h13v11H.5zM1 5.500h13M1 9.500h13M5.500 1v12M10.500 1v12" stroke="#888"/><path d="M16 3l-8 9-3 3q5 1 6-2z" fill="#4a86c0" stroke="#555" stroke-width=".7"/>',
cins:'<path d="M2.500 1.500h3v3h-3zM5.500 1.500h3v3h-3zM2.500 11.500h3v3h-3zM5.500 11.500h3v3h-3zM9.500 6.500h6v3h-6zM2.500 9v3M8.500 9v3"/><path d="M7 7.500H1M4 4L1 7.500l3 3" stroke="#3c6ea5" stroke-width="1.500"/>',cdel:'<path d="M2.500 1.500h3v3h-3zM5.500 1.500h3v3h-3zM2.500 11.500h3v3h-3zM5.500 11.500h3v3h-3zM.5 6.500h6v3h-6z"/><path d="M9 4l6 7M15 4l-6 7" stroke="#d05030" stroke-width="2"/>',cfmt:'<path d="M.5 4.500h14v10H.5zM1 7.500h14M1 11.500h14M4.500 4v11M10.500 4v11M2.500 0v3M13.500 0v3M3 1.500h10"/><path d="M5 8h5v3H5z" fill="#3c6ea5" stroke="none"/>',
sigma:'<path d="M14 4V2H2l6 6-6 6h12v-2" stroke="#444" stroke-width="2"/>',az:'<g color="#3c6ea5">'+T('A',0,7,9)+'</g><g color="#84a">'+T('Z',0,16,9)+'</g><path d="M8 6h7l-3 3v4l-1-1V9z" fill="#555"/>',filldown:'<path d="M2.500 2.500h12v12h-12z" fill="#fff"/><path d="M2 3h12" stroke-width="2"/><path d="M8 5v7M5 9l3 3 3-3" stroke="#3c6ea5" stroke-width="2"/>',find:'<circle cx="10" cy="6" r="4" stroke="#3c7ab5" stroke-width="1.700"/><path d="M7 9l-5 5" stroke="#3c7ab5" stroke-width="2"/>',eraser:'<path d="M2 10l8-8 4 4-7 7H4z" fill="#ee8496" stroke="none"/><path d="M2 10l3-3 4 4-2 3H4z" fill="#c9aab2" stroke="none"/><path d="M6 14.500h8"/>',
no:'<path d="M3 3l10 10M13 3L3 13" stroke="#bbb" stroke-width="1.500"/>',yes:'<path d="M2 8l4 5 8-9" stroke="#bbb" stroke-width="2.500"/>',fxs:T('fx',2,12,14,'font-family="Liberation Serif" font-style="italic" font-weight="bold"'),
triu:'<path d="M4 10l4-4 4 4z" fill="#666" stroke="none"/>',trid:'<path d="M4 6h8l-4 4z" fill="#666" stroke="none"/>',tril:'<path d="M6 5v6L3 8z" fill="#bbb" stroke="none"/>',trir:'<path d="M6 5v6l3-3z" fill="#bbb" stroke="none"/>',tril2:'<path d="M10 4v8L6 8z" fill="#555" stroke="none"/>',trir2:'<path d="M6 4v8l4-4z" fill="#555" stroke="none"/>',plus:'<circle cx="8" cy="8" r="7.500" stroke="#666"/><path d="M4 8h8M8 4v8" stroke="#666" stroke-width="2"/>'
};
const big={bigpaste:[28,32,'<path d="M1 5h20v22H1z" fill="#cfcfcf"/><path d="M5 2h12v5H5z" fill="#aaa"/><path d="M15.500 12.500h7l5 5v12h-12z" fill="#f6f6f6" stroke="#aaa"/><path d="M22.500 12.500v5h5" stroke="#aaa" fill="none"/>'],
addapps:[32,32,'<path d="M.5.5h31v31H.5z" fill="#dcdcdc" stroke="#888"/><path d="M1 4h30" stroke="#888" stroke-width="4"/><g fill="none" stroke="#666"><circle cx="13" cy="21" r="4" stroke-width="3"/><circle cx="13" cy="21" r="6" stroke-width="2" stroke-dasharray="2 2"/><circle cx="20" cy="13" r="3" stroke-width="2"/><circle cx="20" cy="13" r="5" stroke-dasharray="2 1"/></g><path d="M23 17v10M18 22h10" stroke="#d9222a" stroke-width="4"/>'],
tangent:[33,33,'<rect width="33" height="33" rx="5" fill="#999"/><path d="M4 27Q19 20 25 3M10 29L29 5" fill="none" stroke="#fff" stroke-width="2"/><circle cx="21" cy="15" r="3" fill="#e88"/>']};
const smooth=/^(undo|redo|bulb|person|chev|plus|xcut|cut|find|no|yes|run|hand|panhand|palette|orient|wrap|merge|polar|zoom|look|plotlook|gear|fmt|xfill|comma|sun)/;
const svg=n=>big[n]?`<svg width="${big[n][0]}" height="${big[n][1]}">${big[n][2]}</svg>`:`<svg width="16" height="16" viewBox="0 0 16 16" fill="none" stroke="currentColor" aria-hidden="true"${smooth.test(n)?'':' shape-rendering="crispEdges"'}>${I[n]||''}</svg>`;
const capArt='<svg width="8" height="8" class="mb-1"><path d="M1 1.500h6" stroke="#000"/><path d="M1 4h6L4 7z"/></svg>';
function tool(t){
  const m=t.match(/^([^:^*]+)(\^?)(\*?)(?::(.+))?$/),n=m?m[1]:t,a=m&&m[4],w=a?` style="width:${a}px"`:'';
  if(n==='|'||n==='sep')return`<span class="sepv"${w}></span>`;
  if(n==='v')return`<span class="dropv"${w}></span>`;
  if(n==='grip')return'<span class="grip"></span>';
  if(n==='gap')return`<span style="flex:0 0 ${a}px"></span>`;
  if(n==='t')return`<span>${a}</span>`;
  if(n==='cap')return`<span class="cap">${capArt}</span>`;
  if(n==='cap2')return`<span class="cap flex-column align-items-center justify-content-between pt-1"><svg width="8" height="5"><path d="M0 0v5l3-2.500zM4 0v5l3-2.500z"/></svg>${capArt}</span>`;
  if(n==='capr')return'<span class="cap"><svg width="10" height="8" class="me-1"><path d="M2.500 1v6" stroke="#000"/><path d="M5 0v8l4-4z"/></svg></span>';
  if(n==='phead')return'<svg width="9" height="5"><path d="M0 0h9L4.500 5z"/></svg><svg width="8" height="10" fill="none" stroke="#000"><path d="M2.500 5.500V.5h3v5M0 5.500h8M4 6v4"/></svg><svg width="8" height="8" stroke="#000" stroke-width="1.500"><path d="M0 0l8 8M8 0L0 8"/></svg>';
  return`<button class="tb${m[2]?' corner':''}${m[3]?' on':''}"${w} aria-label="${n}">${svg(n)}</button>`;
}
document.querySelectorAll('[data-tools]').forEach(e=>{
  let h=e.dataset.tools.split(' ').map(tool).join('');
  if(e.tagName==='BUTTON')h=h.replace(/<button class="tb"[^>]*>/g,'<span class="tb">').replace(/<\/button>/g,'</span>');
  e.innerHTML=h;
});
document.querySelectorAll('[data-i]').forEach(e=>{e.innerHTML=svg(e.dataset.i);if(e.tagName==='SPAN')e.classList.add('d-flex','flex-shrink-0')});
const rows=[['X','Y1','Y2','Y3'],[1,1,1,.84147],[2,4,2.14355,.9093],[3,9,3.34837,.14112],[4,16,4.59479,-.7568],[5,25,5.87309,-.95892],[6,36,7.17739,-.27942],[7,49,8.5037,.65699],[8,64,9.84916,.98936],[9,81,11.21158,.41212]];
let h='<thead><tr><th><svg width="12" height="11" class="d-block ms-auto"><path d="M12 0v11H0z" fill="#bbb"/></svg></th>'+[...'ABCDEFGHIJK'].map(c=>`<th${c==='F'?' class="sel"':''}>${c}</th>`).join('')+'</tr></thead><tbody>';
rows.forEach((r,i)=>{h+=`<tr><th${i===9?' class="sel"':''}>${i+1}</th>`;for(let c=0;c<11;c++)h+=`<td class="${i?'':'tx'}${i===9&&c===5?' cur':''}">${r[c]??''}</td>`;h+='</tr>'});
frontcells.innerHTML=h+'</tbody>';
const br={16:[15,225,'19.66579'],17:[16,256,'21.11213'],18:[17,289,'22.36204','-0.9614']};
h='<thead><tr style="height:30px"><th></th>'+'<th></th>'.repeat(7)+'<th class="align-bottom">H</th></tr></thead><tbody>';
for(let i=1;i<19;i++){h+=`<tr><th>${i>15?i:''}</th>`;for(let c=0;c<8;c++)h+=`<td>${br[i]?.[c]??''}</td>`;h+='</tr>'}
backcells.innerHTML=h+'</tbody>';
</script>
</body>
</html>
